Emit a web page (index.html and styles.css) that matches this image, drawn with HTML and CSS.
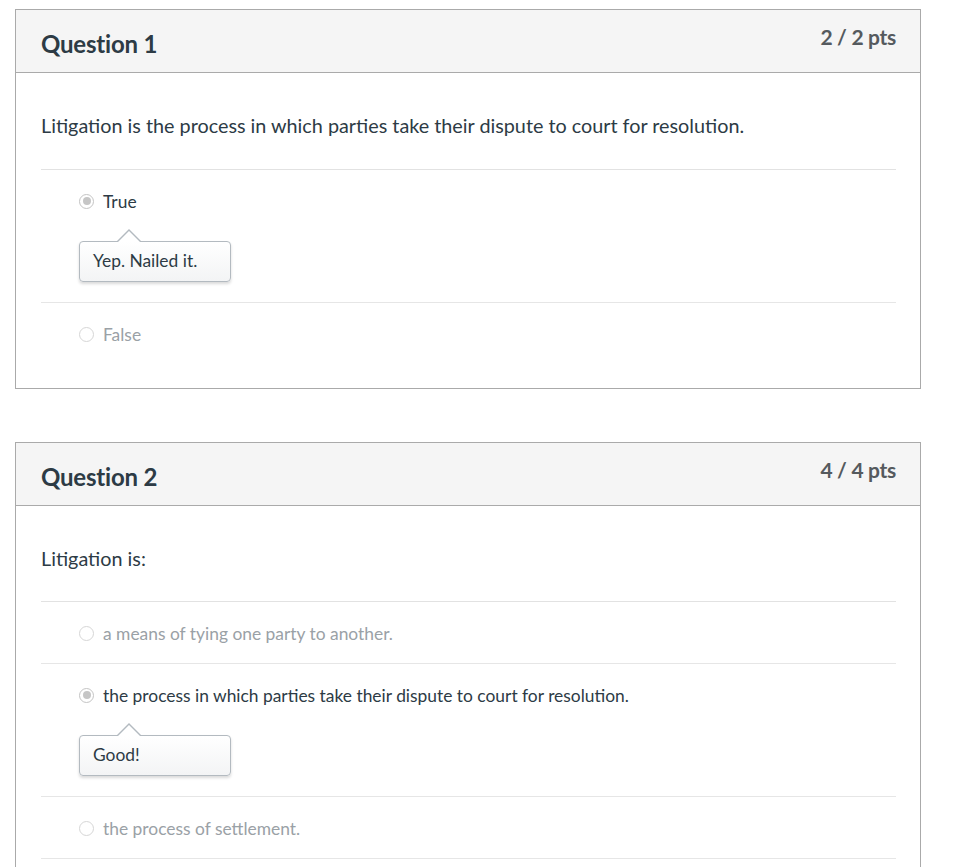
FILE: index.html
```html
<!DOCTYPE html>
<html>
<head>
<meta charset="utf-8">
<link rel="stylesheet" href="styles.css">
</head>
<body>
<div class="page">
  <div class="question">
    <div class="header">
      <h2 class="title">Question 1</h2>
      <div class="pts">2 / 2 pts</div>
    </div>
    <div class="content">
      <div class="qtext">Litigation is the process in which parties take their dispute to court for resolution.</div>
      <div class="answers">
        <div class="answer correct">
          <div class="opt"><span class="radio checked"></span><span class="label">True</span></div>
          <div class="comment">Yep. Nailed it.</div>
        </div>
        <div class="answer">
          <div class="opt"><span class="radio"></span><span class="label">False</span></div>
        </div>
      </div>
    </div>
  </div>

  <div class="question">
    <div class="header">
      <h2 class="title">Question 2</h2>
      <div class="pts">4 / 4 pts</div>
    </div>
    <div class="content">
      <div class="qtext">Litigation is:</div>
      <div class="answers answers-open">
        <div class="answer">
          <div class="opt"><span class="radio"></span><span class="label">a means of tying one party to another.</span></div>
        </div>
        <div class="answer correct">
          <div class="opt"><span class="radio checked"></span><span class="label">the process in which parties take their dispute to court for resolution.</span></div>
          <div class="comment">Good!</div>
        </div>
        <div class="answer">
          <div class="opt"><span class="radio"></span><span class="label">the process of settlement.</span></div>
        </div>
      </div>
    </div>
  </div>
</div>
</body>
</html>
```

FILE: styles.css
```css
html, body {
  margin: 0;
  padding: 0;
  background: #fff;
}
body {
  font-family: Lato, "Open Sans", sans-serif;
  color: #2d3b45;
}
.page {
  padding: 9px 39px 0 15px;
}
.question {
  border: 1px solid #aaaaaa;
  margin-bottom: 53px;
}
.header {
  background: #f5f5f5;
  border-bottom: 1px solid #aaaaaa;
  height: 62px;
  display: flex;
  justify-content: space-between;
  padding: 0 24px 0 25px;
}
.title {
  margin: 0;
  font-size: 24px;
  font-weight: 700;
  line-height: 1;
  padding-top: 22px;
  color: #2d3b45;
  letter-spacing: -0.2px;
}
.pts {
  font-size: 21px;
  font-weight: 700;
  color: #555a5e;
  padding-top: 16px;
  line-height: 1;
  letter-spacing: -0.3px;
}
.content {
  padding: 39px 24px 24px 25px;
}
.qtext {
  font-size: 19.8px;
  line-height: 26px;
  margin-bottom: 31px;
}
.answers {
  border-top: 1px solid #e2e2e2;
}
.answers-open {
  margin-top: -1px;
}
.answer {
  border-bottom: 1px solid #e6e6e6;
  padding: 20px 0 19px 38px;
}
.answer:last-child {
  border-bottom: none;
}
.answers-open .answer:last-child {
  border-bottom: 1px solid #e6e6e6;
}
.opt {
  display: flex;
  align-items: center;
  height: 22px;
}
.radio {
  flex: none;
  width: 15px;
  height: 15px;
  box-sizing: border-box;
  border: 1px solid #d6d6d6;
  border-radius: 50%;
  margin-right: 9px;
  background: #fff;
  position: relative;
}
.radio.checked {
  border-color: #c4c4c4;
}
.radio.checked::after {
  content: "";
  position: absolute;
  left: 2.5px;
  top: 2.5px;
  width: 8px;
  height: 8px;
  border-radius: 50%;
  background: #c6c6c6;
}
.label {
  font-size: 17.4px;
  color: #9aa1a6;
}
.correct .label {
  color: #2d3b45;
}
.comment {
  position: relative;
  display: inline-block;
  margin-top: 29px;
  margin-bottom: 1px;
  min-width: 124px;
  padding: 9px 13px 10px 13px;
  font-size: 17.4px;
  line-height: 20px;
  border: 1px solid #b3bac0;
  border-radius: 4px;
  background: linear-gradient(#ffffff, #f3f4f5);
  box-shadow: 0 2px 3px rgba(0,0,0,0.15);
  color: #2d3b45;
  vertical-align: top;
}
.comment::before {
  content: "";
  position: absolute;
  top: -13px;
  left: 37px;
  width: 0;
  height: 0;
  border-left: 12px solid transparent;
  border-right: 12px solid transparent;
  border-bottom: 12px solid #b3bac0;
}
.comment::after {
  content: "";
  position: absolute;
  top: -11px;
  left: 38px;
  width: 0;
  height: 0;
  border-left: 11px solid transparent;
  border-right: 11px solid transparent;
  border-bottom: 11px solid #ffffff;
}
```
